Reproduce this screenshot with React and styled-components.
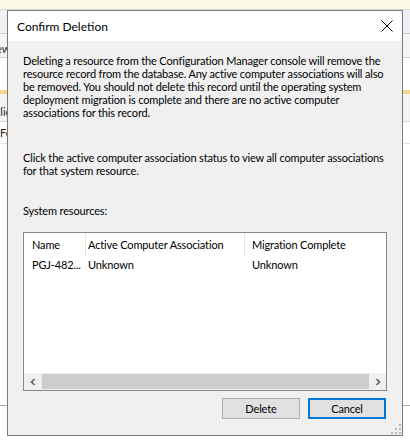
import React from 'react';
import styled, { createGlobalStyle } from 'styled-components';

const Global = createGlobalStyle`
  html, body { margin: 0; padding: 0; background: #ffffff; }
  * { box-sizing: border-box; }
`;

const uiFont = `"Segoe UI", Lato, "Liberation Sans", sans-serif`;

const Desktop = styled.div`
  position: relative;
  width: 410px;
  height: 446px;
  overflow: hidden;
  background: #ffffff;
  font-family: ${uiFont};
`;

/* the console window behind the dialog */
const Console = styled.div`
  display: flex;
  flex-direction: column;
  height: 100%;
`;

const Strip = styled.div`
  flex: 0 0 ${p => p.h}px;
  background: ${p => p.bg || '#ffffff'};
  border-bottom: ${p => (p.line ? `1px solid ${p.line}` : 'none')};
  font-size: 11px;
  color: #1e1e1e;
  line-height: ${p => p.lh || p.h}px;
  text-indent: ${p => p.indent || 0}px;
  white-space: nowrap;
  overflow: hidden;
`;

const Dialog = styled.div`
  position: absolute;
  left: 7px;
  top: 10px;
  width: 396px;
  height: 426px;
  border: 1px solid #7a7a7a;
  background: #f0f0f0;
  display: flex;
  flex-direction: column;
`;

const TitleBar = styled.div`
  flex: 0 0 30px;
  background: #ffffff;
  display: flex;
  align-items: center;
  justify-content: space-between;
  padding: 0 9px 0 9px;
`;

const Title = styled.span`
  font-size: 12px;
  color: #000000;
`;

const Body = styled.div`
  flex: 1;
  position: relative;
  display: flex;
  flex-direction: column;
  padding: 13px 15px 0 15px;
  font-size: 11px;
  line-height: 13px;
  letter-spacing: -0.15px;
  color: #000000;
`;

const Text = styled.p`
  margin: ${p => p.top || 0}px 0 0 0;
  white-space: nowrap;
`;

const ListView = styled.div`
  margin-top: 15px;
  height: 159px;
  border: 1px solid #828790;
  background: #ffffff;
  display: flex;
  flex-direction: column;
`;

const Columns = styled.div`
  display: grid;
  grid-template-columns: 62px 159px 1fr;
  height: ${p => p.h}px;
  line-height: ${p => p.h}px;
  white-space: nowrap;
`;

const Cell = styled.div`
  padding-left: ${p => p.pad}px;
  border-right: ${p => (p.sep ? '1px solid #e5e5e5' : 'none')};
  overflow: hidden;
`;

const Fill = styled.div`
  flex: 1;
`;

const HScroll = styled.div`
  flex: 0 0 17px;
  display: grid;
  grid-template-columns: 17px 1fr 17px;
  background: #f0f0f0;
`;

const Arrow = styled.div`
  display: flex;
  align-items: center;
  justify-content: center;
`;

const Thumb = styled.div`
  margin: 1px 0 1px 1px;
  background: #cdcdcd;
`;

const ButtonRow = styled.div`
  margin-top: 7px;
  display: flex;
  justify-content: flex-end;
  gap: 8px;
  padding-right: 1px;
`;

const Button = styled.button`
  width: 78px;
  height: 21px;
  padding: 0;
  font-family: ${uiFont};
  font-size: 11px;
  letter-spacing: -0.15px;
  color: #000000;
  background: #e1e1e1;
  border: ${p => (p.primary ? '2px solid #0078d7' : '1px solid #adadad')};
`;

const Grip = styled.svg`
  position: absolute;
  right: 1px;
  bottom: 1px;
`;

const Chevron = ({ dir }) => (
  <svg width="8" height="8" viewBox="0 0 8 8">
    <path
      d={dir === 'left' ? 'M5.5 1 L2.5 4 L5.5 7' : 'M2.5 1 L5.5 4 L2.5 7'}
      fill="none"
      stroke="#606060"
      strokeWidth="1.6"
    />
  </svg>
);

export default function App() {
  return (
    <Desktop>
      <Global />
      <Console>
        <Strip h={10} bg="#fcf9e6" line="#d6d6d6" />
        <Strip h={24} bg="#eef0f3" line="#c9c9c9" />
        <Strip h={24} bg="#f5f5f5" line="#d0d0d0" lh={30} indent={-14}>View</Strip>
        <Strip h={32} />
        <Strip h={4} bg="#f2d68c" />
        <Strip h={28} bg="#f4f4f4" line="#d9d9d9" lh={36} indent={-7}>Client</Strip>
        <Strip h={22} line="#e3e3e3">Features</Strip>
        <Strip h={262} line="#a9a9a9" />
        <Fill />
      </Console>

      <Dialog>
        <TitleBar>
          <Title>Confirm Deletion</Title>
          <svg width="12" height="12" viewBox="0 0 12 12">
            <path d="M0.5 0.5 L11.5 11.5 M11.5 0.5 L0.5 11.5" stroke="#000" strokeWidth="1" />
          </svg>
        </TitleBar>

        <Body>
          <Text>
            Deleting a resource from the Configuration Manager console will remove the<br />
            resource record from the database. Any active computer associations will also<br />
            be removed. You should not delete this record until the operating system<br />
            deployment migration is complete and there are no active computer<br />
            associations for this record.
          </Text>
          <Text top={32}>
            Click the active computer association status to view all computer associations<br />
            for that system resource.
          </Text>
          <Text top={27}>System resources:</Text>

          <ListView>
            <Columns h={24}>
              <Cell pad={8} sep>Name</Cell>
              <Cell pad={2} sep>Active Computer Association</Cell>
              <Cell pad={7}>Migration Complete</Cell>
            </Columns>
            <Columns h={16}>
              <Cell pad={8}>PGJ-482...</Cell>
              <Cell pad={2}>Unknown</Cell>
              <Cell pad={7}>Unknown</Cell>
            </Columns>
            <Fill />
            <HScroll>
              <Arrow><Chevron dir="left" /></Arrow>
              <Thumb />
              <Arrow><Chevron dir="right" /></Arrow>
            </HScroll>
          </ListView>

          <ButtonRow>
            <Button>Delete</Button>
            <Button primary>Cancel</Button>
          </ButtonRow>

          <Grip width="10" height="10" viewBox="0 0 10 10">
            <g fill="#b8b8b8">
              <rect x="8" y="0" width="2" height="2" />
              <rect x="4" y="4" width="2" height="2" />
              <rect x="8" y="4" width="2" height="2" />
              <rect x="0" y="8" width="2" height="2" />
              <rect x="4" y="8" width="2" height="2" />
              <rect x="8" y="8" width="2" height="2" />
            </g>
          </Grip>
        </Body>
      </Dialog>
    </Desktop>
  );
}
